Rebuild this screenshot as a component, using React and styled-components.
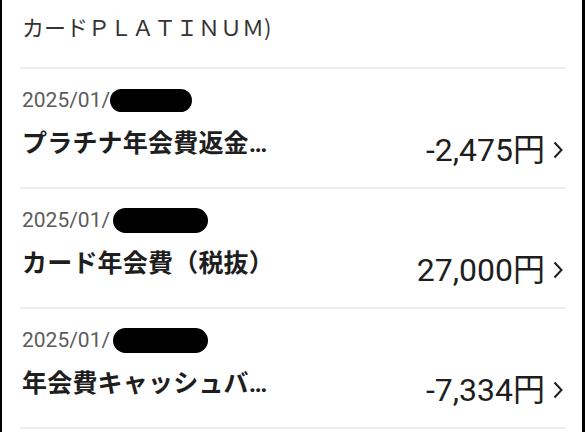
import React from 'react'
import styled, { createGlobalStyle } from 'styled-components'

const GlobalStyle = createGlobalStyle`
  html, body {
    margin: 0;
    padding: 0;
    background: #ffffff;
  }
  * {
    box-sizing: border-box;
  }
`

const Frame = styled.div`
  width: 585px;
  height: 432px;
  overflow: hidden;
  background: #ffffff;
  border-left: 2px solid #000000;
  border-right: 3px solid #000000;
  padding: 0 16px 0 18px;
  font-family: "Noto Sans CJK JP", sans-serif;
`

const Header = styled.div`
  height: 69px;
  padding: 12px 0 0 2px;
  border-bottom: 2px solid #ededed;
  font-size: 22px;
  line-height: 28px;
  color: #333333;
`

const Row = styled.div`
  height: 120px;
  padding: 19px 3px 0 2px;
  border-bottom: 2px solid #ededed;
  display: flex;
  flex-direction: column;
`

const DateLine = styled.div`
  display: flex;
  align-items: center;
  height: 24px;
  font-family: Roboto, "Noto Sans CJK JP", sans-serif;
  font-size: 21px;
  line-height: 24px;
  color: #5c5c5c;
`

const Redacted = styled.span`
  display: inline-block;
  width: ${p => p.w}px;
  height: ${p => p.h}px;
  margin-left: ${p => p.offset}px;
  border-radius: 13px;
  background: #000000;
`

const MainLine = styled.div`
  margin-top: 16px;
  display: flex;
  justify-content: space-between;
  align-items: flex-start;
`

const Title = styled.div`
  font-family: Roboto, "Noto Sans CJK JP", sans-serif;
  font-size: 25px;
  line-height: 32px;
  font-weight: 700;
  color: #1e1e1e;
  letter-spacing: 0.2px;
`

const AmountBox = styled.div`
  display: flex;
  align-items: center;
  gap: 8px;
  margin-top: 3px;
`

const Amount = styled.span`
  font-family: Roboto, "Noto Sans CJK JP", sans-serif;
  font-size: 32px;
  line-height: 38px;
  font-weight: 400;
  color: #1e1e1e;
`

const Chevron = () => (
  <svg width="10" height="18" viewBox="0 0 10 18" fill="none">
    <polyline points="1.5,1.5 8.5,9 1.5,16.5" stroke="#1e1e1e" strokeWidth="2" />
  </svg>
)

const items = [
  { title: 'プラチナ年会費返金…', amount: '-2,475円', w: 82, h: 23, offset: 0 },
  { title: 'カード年会費（税抜）', amount: '27,000円', w: 95, h: 25, offset: 3 },
  { title: '年会費キャッシュバ…', amount: '-7,334円', w: 95, h: 25, offset: 3 },
]

export default function App() {
  return (
    <Frame>
      <GlobalStyle />
      <Header>カードＰＬＡＴＩＮＵＭ)</Header>
      {items.map((it, i) => (
        <Row key={i}>
          <DateLine>
            2025/01/
            <Redacted w={it.w} h={it.h} offset={it.offset} />
          </DateLine>
          <MainLine>
            <Title>{it.title}</Title>
            <AmountBox>
              <Amount>{it.amount}</Amount>
              <Chevron />
            </AmountBox>
          </MainLine>
        </Row>
      ))}
    </Frame>
  )
}
